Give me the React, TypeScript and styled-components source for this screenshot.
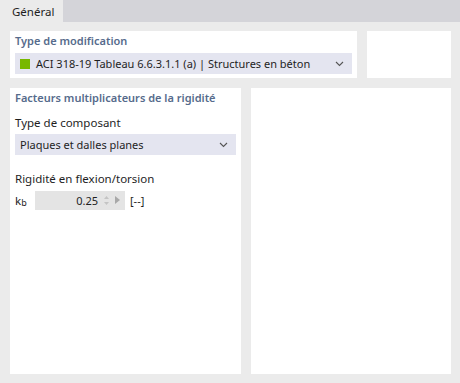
import * as React from 'react';
import styled, { createGlobalStyle } from 'styled-components';

const GlobalStyle = createGlobalStyle`
	html, body {
		margin: 0;
		padding: 0;
		background: #ebebeb;
	}
	body {
		font-family: 'Noto Sans', 'Open Sans', sans-serif;
		font-size: 11px;
		color: #1e1e1e;
	}
`;

const Window = styled.div`
	width: 460px;
	height: 383px;
	display: flex;
	flex-direction: column;
	background: #ebebeb;
	overflow: hidden;
`;

const TabStrip = styled.div`
	height: 22px;
	flex: none;
	display: flex;
	background: #d4d4d9;
`;

const Tab = styled.div`
	width: 63px;
	display: flex;
	align-items: center;
	padding-left: 12px;
	box-sizing: border-box;
	background: #ebebeb;
	font-size: 11.5px;
	color: #1e1e1e;
`;

const Body = styled.div`
	flex: 1;
	display: flex;
	flex-direction: column;
	gap: 10px;
	padding: 9px 9px 9px 10px;
	border-left: 1px solid #d2d2da;
	margin-left: -1px;
`;

const Row = styled.div<{ $grow?: boolean }>`
	display: flex;
	gap: 10px;
	${(p) => (p.$grow ? 'flex: 1;' : 'height: 47px;')}
`;

const Panel = styled.div<{ $width: number }>`
	width: ${(p) => p.$width}px;
	flex: none;
	background: #fff;
	padding: 2px 5px 0 5px;
	box-sizing: border-box;
	display: flex;
	flex-direction: column;
`;

const PanelTitle = styled.div`
	font-weight: 600;
	color: #566b8c;
	font-size: 11px;
	line-height: 16px;
	margin-bottom: 4px;
`;

const Select = styled.div<{ $width: number }>`
	width: ${(p) => p.$width}px;
	height: 21px;
	background: #e4e5f0;
	display: flex;
	align-items: center;
	padding: 0 8px 0 5px;
	box-sizing: border-box;
	gap: 6px;
	flex: none;
`;

const Swatch = styled.span`
	width: 10px;
	height: 10px;
	background: #78b800;
	flex: none;
`;

const SelectText = styled.span`
	flex: 1;
	white-space: nowrap;
`;

const Label = styled.div<{ $top: number }>`
	line-height: 16px;
	margin: ${(p) => p.$top}px 0 3px;
	font-size: 11.5px;
`;

const ValueRow = styled.div`
	display: flex;
	align-items: center;
	height: 20px;
`;

const Symbol = styled.span`
	width: 20px;
	font-size: 11.5px;
	sub {
		font-size: 9px;
		vertical-align: baseline;
		position: relative;
		top: 1px;
	}
`;

const NumberBox = styled.div`
	width: 90px;
	height: 19px;
	background: #e4e4e4;
	display: flex;
	align-items: center;
	justify-content: flex-end;
	padding-right: 5px;
	box-sizing: border-box;
	gap: 5px;
`;

const Unit = styled.span`
	margin-left: 5px;
`;

const Chevron = () => (
	<svg width="9" height="6" viewBox="0 0 9 6">
		<path d="M1 1 L4.5 4.5 L8 1" stroke="#555" strokeWidth="1.1" fill="none" />
	</svg>
);

const Spinner = () => (
	<svg width="7" height="11" viewBox="0 0 7 11">
		<path d="M3.5 1 L6 4 L1 4 Z" fill="#c4c4c4" />
		<path d="M1 7 L6 7 L3.5 10 Z" fill="#c4c4c4" />
	</svg>
);

const Play = () => (
	<svg width="5" height="8" viewBox="0 0 5 8">
		<path d="M0 0 L5 4 L0 8 Z" fill="#a8a8a8" />
	</svg>
);

export default function App() {
	return (
		<Window>
			<GlobalStyle />
			<TabStrip>
				<Tab>Général</Tab>
			</TabStrip>
			<Body>
				<Row>
					<Panel $width={347}>
						<PanelTitle>Type de modification</PanelTitle>
						<Select $width={337}>
							<Swatch />
							<SelectText>ACI 318-19 Tableau 6.6.3.1.1 (a) | Structures en béton</SelectText>
							<Chevron />
						</Select>
					</Panel>
					<Panel $width={84} />
				</Row>
				<Row $grow>
					<Panel $width={231}>
						<PanelTitle>Facteurs multiplicateurs de la rigidité</PanelTitle>
						<Label $top={5}>Type de composant</Label>
						<Select $width={221}>
							<SelectText>Plaques et dalles planes</SelectText>
							<Chevron />
						</Select>
						<Label $top={16}>Rigidité en flexion/torsion</Label>
						<ValueRow>
							<Symbol>
								k<sub>b</sub>
							</Symbol>
							<NumberBox>
								<span>0.25</span>
								<Spinner />
								<Play />
							</NumberBox>
							<Unit>[--]</Unit>
						</ValueRow>
					</Panel>
					<Panel $width={200} />
				</Row>
			</Body>
		</Window>
	);
}
